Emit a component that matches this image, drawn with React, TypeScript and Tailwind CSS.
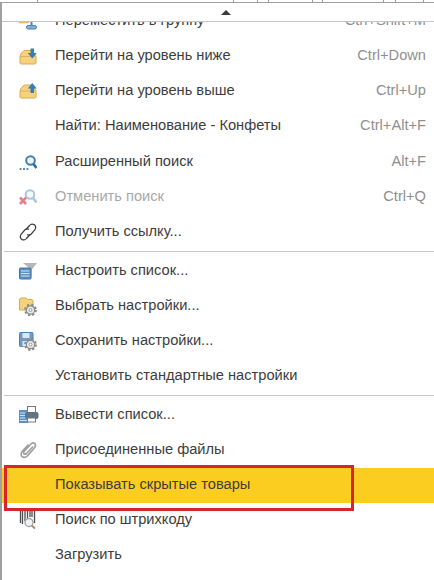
import React from 'react'

const FolderDown = () => (
  <svg width="18" height="18" viewBox="0 0 18 18">
    <path d="M1 9 Q1.500 7 4 4.500 Q5 3.500 6.500 3.500 H12 Q13 3.500 14 5 L17 9 V16 Q17 17 15.500 17 H2.500 Q1 17 1 16 Z" fill="#f7d27c" stroke="#d8a857" />
    <path d="M1.500 9.500 H16.500" stroke="#dcb060" />
    <path d="M11.500 1.500 H15 V6 H17.800 L13.250 11.500 L8.700 6 H11.500 Z" fill="#2f7fc1" />
  </svg>
)

const FolderUp = () => (
  <svg width="18" height="18" viewBox="0 0 18 18">
    <path d="M1 8.500 Q1.500 6.500 4 4 Q5 3 6.500 3 H12 Q13 3 14 4.500 L17 8.500 V15 Q17 16 15.500 16 H2.500 Q1 16 1 15 Z" fill="#f7d27c" stroke="#d8a857" />
    <path d="M1.500 9 H16.500" stroke="#dcb060" />
    <path d="M13.250 1 L17.800 6.500 H15 V11 H11.500 V6.500 H8.700 Z" fill="#2f7fc1" />
  </svg>
)

const MoveIcon = () => (
  <svg width="20" height="10" viewBox="0 0 20 10">
    <path d="M0 0.500 H10" stroke="#eab676" strokeWidth="1.500" />
    <path d="M12.500 0 V4" stroke="#4a86bd" strokeWidth="2" />
    <rect x="7.500" y="3.500" width="10" height="3.500" rx="1.700" fill="#86aed3" stroke="#4a7fb0" />
  </svg>
)

const SearchAdvanced = () => (
  <svg width="18" height="18" viewBox="0 0 18 18">
    <circle cx="11.500" cy="7.500" r="4.300" fill="#eef5fa" stroke="#3f7fb5" strokeWidth="2" />
    <path d="M14.500 11 L17.500 15" stroke="#2f6c9f" strokeWidth="2.600" />
    <path d="M0.500 16 H2.500 M4 16 H6 M7.500 16 H9.500" stroke="#2f6c9f" strokeWidth="1.600" />
  </svg>
)

const SearchCancel = () => (
  <svg width="18" height="18" viewBox="0 0 18 18">
    <circle cx="11" cy="6.500" r="4.300" fill="#f4f8fb" stroke="#a9c6de" strokeWidth="2" />
    <path d="M14 10 L17.500 14.500" stroke="#a9c6de" strokeWidth="2.600" />
    <path d="M1 9.500 L7 16 M7 9.500 L1 16" stroke="#e5808c" strokeWidth="2.600" />
  </svg>
)

const LinkIcon = () => (
  <svg width="18" height="20" viewBox="0 0 18 20" fill="none" stroke="#3c3c3c" strokeWidth="1.200">
    <path d="M7 7.500 L10.500 3.500 Q12.500 1 15.500 2.800 Q17.800 5 15.800 8 L12 12.200 Q10 14 8 12.500" />
    <path d="M11 12.500 L7.500 16.500 Q5.500 19 2.500 17.200 Q0.200 15 2.200 12 L6 7.800 Q8 6 10 7.500" />
  </svg>
)

const ListFilter = () => (
  <svg width="18" height="18" viewBox="0 0 18 18">
    <path d="M4 1 H18 L12.500 8 V15 H10 V6 Z" fill="#b4b8bc" />
    <rect x="0.500" y="6" width="11.500" height="11" rx="1" fill="#5d8fc0" stroke="#43739f" />
    <path d="M2 9 H10.500 M2 11.500 H10.500 M2 14 H10.500" stroke="#d5e3ef" />
  </svg>
)

const Gear = ({ cx, cy }: { cx: number; cy: number }) => (
  <g>
    <circle cx={cx} cy={cy} r="5.300" fill="none" stroke="#8a8a8a" strokeWidth="2.200" strokeDasharray="2.200 1.960" />
    <circle cx={cx} cy={cy} r="4.200" fill="#ececec" stroke="#8a8a8a" strokeWidth="1.200" />
    <circle cx={cx} cy={cy} r="1.500" fill="#fff" stroke="#8a8a8a" strokeWidth="0.900" />
  </g>
)

const FolderGear = () => (
  <svg width="20" height="20" viewBox="0 0 20 20">
    <path d="M0.500 4 Q0.500 2 2.500 2 H7 L8.500 3.500 H12 Q14 3.500 14 5 V14 H0.500 Z" fill="#f7d27c" stroke="#d8a857" />
    <Gear cx={11.500} cy={14} />
  </svg>
)

const SaveGear = () => (
  <svg width="20" height="20" viewBox="0 0 20 20">
    <rect x="0.500" y="1.500" width="13.500" height="14" rx="1" fill="#6f9bc8" stroke="#4a7fb0" />
    <rect x="3.500" y="2" width="7" height="5" fill="#dbe7f2" />
    <rect x="3.500" y="10" width="5" height="5.500" fill="#dbe7f2" />
    <Gear cx={11.500} cy={13.500} />
  </svg>
)

const PrintIcon = () => (
  <svg width="20" height="18" viewBox="0 0 20 18">
    <rect x="8.500" y="0.500" width="8" height="6" fill="#fff" stroke="#777" />
    <rect x="0" y="4" width="9" height="13" fill="#5d8fc0" />
    <path d="M1 7 H8 M1 9.500 H8 M1 12 H8 M1 14.500 H8" stroke="#d5e3f0" />
    <rect x="6" y="6" width="13.500" height="7" rx="2" fill="#5f7484" />
    <rect x="8.500" y="12" width="8" height="4" fill="#fff" stroke="#777" />
  </svg>
)

const PaperClip = () => (
  <svg width="18" height="20" viewBox="0 0 18 20" fill="none" stroke="#a0a0a0" strokeWidth="1.700">
    <path d="M14 6.500 L7.500 13.500 Q6 14.800 5 13.800 Q4 12.800 5.500 11 L12 4 Q14 2 15.800 3.500 Q17.300 5.500 15.500 7.800 L8.500 15.800 Q5.500 18.500 3 16.500 Q1 14 3.500 11 L9.500 4.500" />
  </svg>
)

const BarcodeSearch = () => (
  <svg width="18" height="20" viewBox="0 0 18 20">
    <path d="M1.500 1 V13 M3.500 1 V14 M6 1 V11 M8.500 1 V8 M11 1 V7 M13 1 V7 M15.500 1 V13" stroke="#4d4d4d" strokeWidth="1.300" />
    <circle cx="10" cy="12.500" r="4" fill="#eef3f7" stroke="#a0a0a0" strokeWidth="1.300" />
    <path d="M12.800 15.500 L16 18.500" stroke="#b08a6a" strokeWidth="1.900" />
  </svg>
)

type Row = {
  label: string
  shortcut?: string
  icon?: React.ReactNode
  muted?: boolean
  active?: boolean
}

const firstGroup: Row[] = [
  { label: 'Перейти на уровень ниже', shortcut: 'Ctrl+Down', icon: <FolderDown /> },
  { label: 'Перейти на уровень выше', shortcut: 'Ctrl+Up', icon: <FolderUp /> },
  { label: 'Найти: Наименование - Конфеты', shortcut: 'Ctrl+Alt+F' },
  { label: 'Расширенный поиск', shortcut: 'Alt+F', icon: <SearchAdvanced /> },
  { label: 'Отменить поиск', shortcut: 'Ctrl+Q', icon: <SearchCancel />, muted: true },
  { label: 'Получить ссылку...', icon: <LinkIcon /> },
]

const secondGroup: Row[] = [
  { label: 'Настроить список...', icon: <ListFilter /> },
  { label: 'Выбрать настройки...', icon: <FolderGear /> },
  { label: 'Сохранить настройки...', icon: <SaveGear /> },
  { label: 'Установить стандартные настройки' },
]

const thirdGroup: Row[] = [
  { label: 'Вывести список...', icon: <PrintIcon /> },
  { label: 'Присоединенные файлы', icon: <PaperClip /> },
  { label: 'Показывать скрытые товары', active: true },
  { label: 'Поиск по штрихкоду', icon: <BarcodeSearch /> },
  { label: 'Загрузить' },
]

const MenuRow = ({ row, tall }: { row: Row; tall?: boolean }) => (
  <div className={`flex items-center pl-[17px] pr-2 ${tall ? 'h-[35.3px]' : 'h-[35.1px]'} ${row.active ? 'bg-[#fbcd20]' : ''}`}>
    <div className="flex w-[36px] shrink-0 items-center">{row.icon}</div>
    <span className={`flex-1 whitespace-nowrap ${row.muted ? 'text-[#a8a8a8]' : 'text-[#3d3d3d]'}`}>{row.label}</span>
    {row.shortcut && <span className="text-[#8f8f8f]">{row.shortcut}</span>}
  </div>
)

const Separator = () => <div className="my-[1.3px] ml-[2px] h-px bg-[#c8c8c8]" />

export default function App() {
  return (
    <div className="relative h-[580px] w-[434px] overflow-hidden bg-white font-['Liberation_Sans',Arial,sans-serif] text-[14.65px]">
      {/* window chrome above the menu */}
      <div className="flex h-[2px] bg-white pl-[37px]">
        <div className="h-full w-px bg-[#9a9a9a]" />
        <div className="ml-[195px] h-full w-px bg-[#9a9a9a]" />
        <div className="ml-[23px] h-full w-px bg-[#9a9a9a]" />
        <div className="ml-[10px] h-full w-px bg-[#9a9a9a]" />
        <div className="ml-[43px] h-full w-px bg-[#9a9a9a]" />
        <div className="ml-[9px] h-full w-px bg-[#9a9a9a]" />
        <div className="ml-[60px] h-full w-px bg-[#9a9a9a]" />
        <div className="ml-[11px] h-full w-px bg-[#9a9a9a]" />
        <div className="ml-[27px] h-full w-px bg-[#9a9a9a]" />
      </div>
      <div className="h-[580px] border-t border-l-2 border-[#a0a0a0]">
        <div className="flex h-[19px] items-center justify-center border-b border-[#c4c4c4] pl-[16px]">
          <div className="h-0 w-0 border-x-[5px] border-b-[5px] border-x-transparent border-b-[#3a3a3a]" />
        </div>
        <div className="h-[16px] overflow-hidden">
          <div className="-mt-[19px] flex h-[35.3px] items-center pl-[17px] pr-2">
            <div className="mt-[13px] w-[36px] shrink-0"><MoveIcon /></div>
            <span className="flex-1 whitespace-nowrap text-[#3d3d3d]">Переместить в группу</span>
            <span className="text-[#8f8f8f]">Ctrl+Shift+M</span>
          </div>
        </div>
        {firstGroup.map((row) => <MenuRow key={row.label} row={row} tall />)}
        <Separator />
        {secondGroup.map((row) => <MenuRow key={row.label} row={row} />)}
        <Separator />
        {thirdGroup.map((row) => <MenuRow key={row.label} row={row} />)}
      </div>
      {/* red annotation frame drawn over the screenshot */}
      <div className="absolute left-[4px] top-[465px] h-[46px] w-[350px] border-[3px] border-[#d9232e]" />
    </div>
  )
}
